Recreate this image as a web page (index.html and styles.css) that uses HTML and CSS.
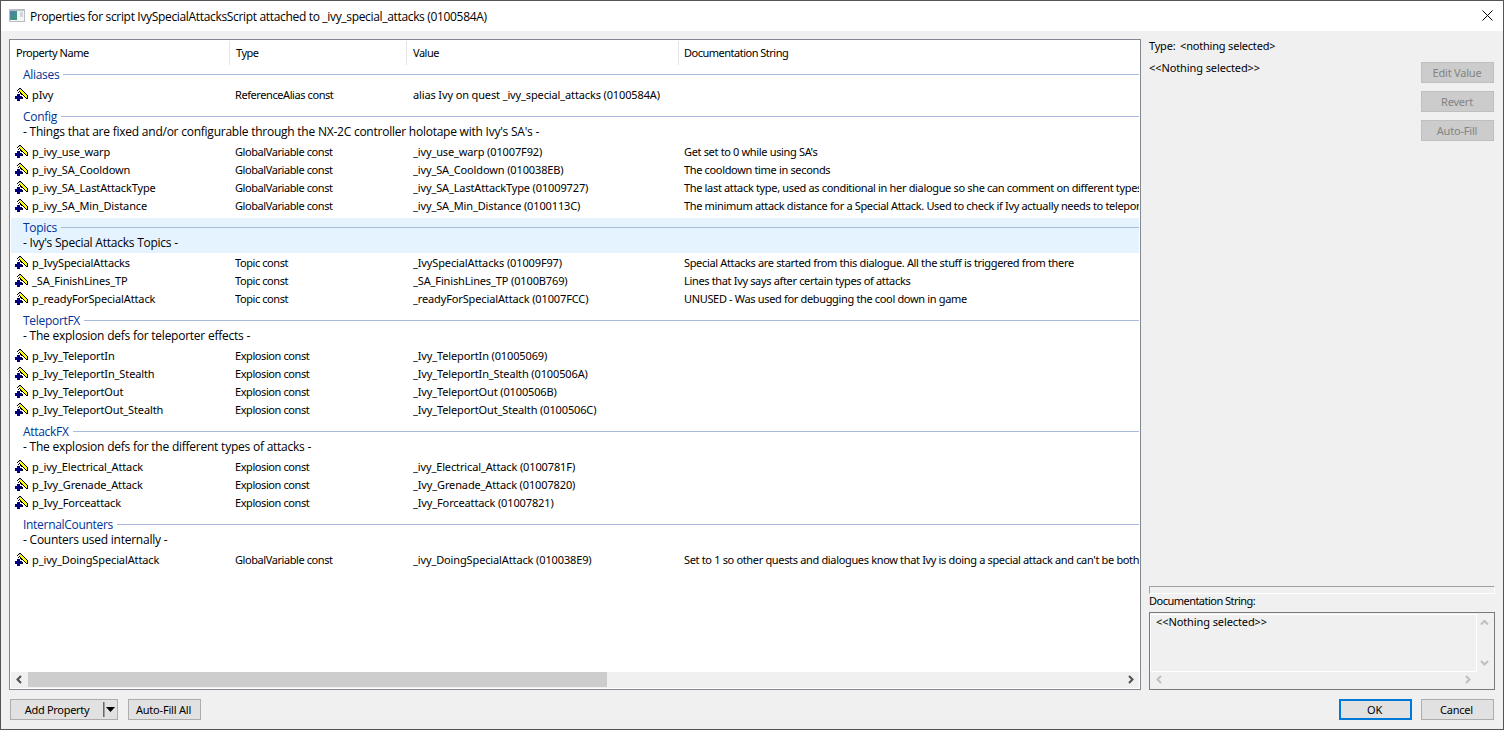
FILE: index.html
```
<!DOCTYPE html>
<html lang="en">
<head>
    <meta charset="UTF-8">
    <title>Properties for script IvySpecialAttacksScript</title>
    <link rel="stylesheet" href="styles.css">
</head>
<body>
    <svg class="defs">
        <linearGradient id="pane" x2="1" y2="1"><stop offset="0" stop-color="#4a7fb5"/><stop offset="1" stop-color="#3f9a6c"/></linearGradient>
        <symbol id="wand" viewBox="0 0 14 14" shape-rendering="crispEdges">
            <path fill="#000" d="M4 0h2v1H4zM3 1h1v1H3zM2 2h1v1H2zM6 1h1v1H6zM7 2h1v1H7zM8 3h1v1H8zM9 4h1v1H9zM10 5h1v1h-1zM11 6h1v1h-1zM12 7h1v3h-1zM4 3h1v1H4zM5 4h1v2H5zM6 5h1v2H6zM7 6h1v1H7zM8 7h1v1H8zM9 8h1v1H9zM10 9h1v1h-1zM11 10h2v1h-2zM3 4h1v1H3zM7 9h1v2H7z"/>
            <path fill="#c0c0c0" d="M4 1h2v1H4z"/>
            <path fill="#ff0" d="M4 2h3v1H4zM5 3h3v1H5zM6 4h3v1H6zM7 5h3v1H7zM8 6h3v1H8zM9 7h3v1H9zM10 8h2v1h-2zM11 9h1v1h-1z"/>
            <path fill="#000080" d="M2 6h3v2h2v3H5v2H2v-2H0V8h2z"/>
        </symbol>
    </svg>
    <div class="window">
        <div class="titlebar">
            <svg class="app-icon" width="16" height="13" viewBox="0 0 16 13"><path fill="#b9bec2" d="M0 0h16v13H0z"/><path fill="#f4f5f6" d="M1 2h14v10H1z"/><path fill="url(#pane)" d="M1 2h7v9H1z"/><path fill="#cfd6dc" d="M11 3h3v5h-3z"/></svg>
            <span class="title">Properties for script IvySpecialAttacksScript attached to _ivy_special_attacks (0100584A)</span>
            <svg class="close" width="11" height="11" viewBox="0 0 11 11"><path stroke="#000" d="M.5.5l10 10M10.5.5l-10 10"/></svg>
        </div>

        <div class="main">
            <div class="list">
                <div class="list-head">
                    <span>Property Name</span><span>Type</span><span>Value</span><span>Documentation String</span>
                </div>
                <div class="list-body" id="list-body"></div>
                <div class="hscroll">
                    <svg width="17" height="15" viewBox="0 0 17 15"><path class="arrow" d="M10 4L6.500 7.500 10 11"/></svg>
                    <div class="track"><div class="thumb"></div></div>
                    <svg width="17" height="15" viewBox="0 0 17 15"><path class="arrow" d="M7 4l3.500 3.500L7 11"/></svg>
                </div>
            </div>

            <div class="side">
                <div class="side-top">
                    <div class="side-info">
                        <div class="type-label">Type: <span>&lt;nothing selected&gt;</span></div>
                        <div class="type-value">&lt;&lt;Nothing selected&gt;&gt;</div>
                    </div>
                    <div class="side-buttons">
                        <button disabled>Edit Value</button>
                        <button disabled>Revert</button>
                        <button disabled>Auto-Fill</button>
                    </div>
                </div>
                <div class="etched"></div>
                <div class="doc-label">Documentation String:</div>
                <div class="doc-box">
                    <div class="doc-text">&lt;&lt;Nothing selected&gt;&gt;</div>
                    <div class="doc-vscroll">
                        <svg width="16" height="17" viewBox="0 0 16 17"><path class="arrow off" d="M4 10.500L7.500 7l3.500 3.500"/></svg>
                        <svg width="16" height="17" viewBox="0 0 16 17"><path class="arrow off" d="M4 6l3.500 3.500L11 6"/></svg>
                    </div>
                    <div class="doc-hscroll">
                        <svg width="17" height="17" viewBox="0 0 17 17"><path class="arrow off" d="M10 4L6.500 7.500 10 11"/></svg>
                        <svg width="17" height="17" viewBox="0 0 17 17"><path class="arrow off" d="M6 4l3.500 3.500L6 11"/></svg>
                    </div>
                </div>
            </div>
        </div>

        <div class="footer">
            <button class="split"><span>Add Property</span><i></i><svg width="9" height="5" viewBox="0 0 9 5"><path d="M0 0h9L4.500 5z"/></svg></button>
            <button>Auto-Fill All</button>
            <div class="spacer"></div>
            <button class="ok">OK</button>
            <button>Cancel</button>
        </div>
    </div>
    <script src="script.js"></script>
</body>
</html>
```
FILE: styles.css
```
* {
    box-sizing: border-box;
}
body {
    margin: 0;
    font-family: 'Noto Sans', sans-serif;
    font-size: 11px;
    letter-spacing: -0.2px;
    color: #000;
    white-space: nowrap;
    overflow: hidden;
}
svg {
    display: block;
    flex: none;
}
.defs {
    position: absolute;
    width: 0;
    height: 0;
}
.window {
    width: 1504px;
    height: 730px;
    border: 1px solid #555;
    background: #f0f0f0;
    display: flex;
    flex-direction: column;
}
.titlebar {
    height: 30px;
    background: #fff;
    display: flex;
    align-items: center;
    padding: 0 10px 0 8px;
}
.app-icon {
    margin-bottom: 2px;
}
.close {
    margin-bottom: 1px;
}
.title {
    flex: 1;
    margin-left: 5px;
    font-family: 'Open Sans', sans-serif;
    font-size: 12px;
    letter-spacing: -0.33px;
}
.main {
    height: 651px;
    margin: 8px 8px 0;
    display: flex;
    gap: 8px;
}
.list {
    width: 1132px;
    border: 1px solid #828790;
    padding: 1px;
    background: #fff;
    display: flex;
    flex-direction: column;
}
.list-head {
    height: 24px;
    display: grid;
    grid-template-columns: 219px 177px 272px 1fr;
    letter-spacing: -0.5px;
    line-height: 23px;
}
.list-head span {
    height: 24px;
    padding-left: 5px;
    border-right: 1px solid #e5e5e5;
}
.list-head span + span {
    padding-left: 6px;
}
.list-head span:last-child {
    padding-left: 5px;
    border: none;
}
.list-head span:first-child {
    letter-spacing: -0.45px;
}
.list-body {
    flex: 1;
}
.group {
    margin: 3px 0 1px;
    height: 35px;
    padding-left: 12px;
    font-family: 'Open Sans', sans-serif;
    font-size: 12px;
    letter-spacing: -0.3px;
}
.group:first-child {
    margin-top: 0;
    height: 20px;
}
.group.hover {
    background: #e5f3ff;
}
.group-title {
    height: 17px;
    line-height: 20px;
    color: #003399;
    display: flex;
}
.group-title::after {
    content: '';
    flex: 1;
    height: 1px;
    margin: 9px 0 0 4px;
    background: #a9bbdd;
}
.group-sub {
    line-height: 15px;
    letter-spacing: -0.25px;
    word-spacing: 0.1px;
}
.row {
    height: 18px;
    line-height: 18px;
    display: grid;
    grid-template-columns: 21px 203px 178px 271px 455px;
}
.row svg {
    width: 14px;
    height: 14px;
    margin: 2px 0 0 4px;
}
.row span {
    overflow: hidden;
}
.name {
    letter-spacing: -0.12px;
}
.type {
    letter-spacing: -0.42px;
}
.value {
    letter-spacing: -0.13px;
}
.doc {
    letter-spacing: -0.34px;
}
.hscroll {
    height: 16px;
    background: #f0f0f0;
    display: flex;
}
.track {
    flex: 1;
}
.thumb {
    width: 579px;
    height: 15px;
    background: #cdcdcd;
}
.arrow {
    fill: none;
    stroke: #505050;
    stroke-width: 2;
}
.arrow.off {
    stroke: #bfbfbf;
}
.side {
    width: 346px;
    display: flex;
    flex-direction: column;
}
.side-top {
    flex: 1;
    display: flex;
    justify-content: space-between;
}
.type-label {
    height: 14px;
    line-height: 14px;
}
.type-label span {
    margin-left: 2px;
}
.type-value {
    margin-top: 8px;
    line-height: 14px;
    letter-spacing: -0.1px;
}
.side-buttons {
    padding: 23px 1px 0 0;
    display: flex;
    flex-direction: column;
    gap: 8px;
}
button {
    width: 73px;
    height: 21px;
    padding: 0 2px 0 0;
    border: 1px solid #adadad;
    background: #e1e1e1;
    color: #000;
    font: inherit;
    letter-spacing: inherit;
    line-height: 19px;
}
button:disabled {
    padding-right: 1px;
    border-color: #bfbfbf;
    background: #ccc;
    color: #838383;
}
.etched {
    height: 8px;
    border: 1px solid #a0a0a0;
    border-right-color: #fff;
    border-bottom-color: #fff;
}
.doc-label {
    height: 18px;
    line-height: 14px;
    letter-spacing: -0.52px;
}
.doc-box {
    height: 78px;
    border: 1px solid #7a7a7a;
    padding: 1px;
    display: grid;
    grid-template-columns: 326px 16px;
    grid-template-rows: 58px 16px;
}
.doc-text {
    padding-left: 5px;
    line-height: 14px;
    letter-spacing: -0.1px;
    border: 1px solid #fff;
    margin-left: -1px;
}
.doc-vscroll {
    display: flex;
    flex-direction: column;
    justify-content: space-between;
}
.doc-hscroll {
    display: flex;
    justify-content: space-between;
}
.footer {
    display: flex;
    margin: 9px 9px 0;
}
.footer button + button {
    margin-left: 9px;
}
.spacer {
    flex: 1;
}
.footer .split {
    width: 108px;
    display: flex;
    align-items: center;
}
.split span {
    flex: 1;
    text-align: center;
    letter-spacing: -0.3px;
}
.split i {
    width: 2px;
    height: 15px;
    border-left: 1px solid #696969;
    border-right: 1px solid #a0a0a0;
    margin-right: 1px;
}
.footer .split + button {
    margin-left: 10px;
}
.footer .ok {
    border: 2px solid #0078d7;
    line-height: 17px;
}
```
FILE: script.js
```
const groups = [
    { title: 'Aliases', rows: [
        ['pIvy', 'ReferenceAlias const', 'alias Ivy on quest _ivy_special_attacks (0100584A)', '']
    ]},
    { title: 'Config', sub: "- Things that are fixed and/or configurable through the NX-2C controller holotape with Ivy's SA's -", rows: [
        ['p_ivy_use_warp', 'GlobalVariable const', '_ivy_use_warp (01007F92)', "Get set to 0 while using SA's"],
        ['p_ivy_SA_Cooldown', 'GlobalVariable const', '_ivy_SA_Cooldown (010038EB)', 'The cooldown time in seconds'],
        ['p_ivy_SA_LastAttackType', 'GlobalVariable const', '_ivy_SA_LastAttackType (01009727)', 'The last attack type, used as conditional in her dialogue so she can comment on different types'],
        ['p_ivy_SA_Min_Distance', 'GlobalVariable const', '_ivy_SA_Min_Distance (0100113C)', 'The minimum attack distance for a Special Attack. Used to check if Ivy actually needs to telepor']
    ]},
    { title: 'Topics', hover: true, sub: "- Ivy's Special Attacks Topics -", rows: [
        ['p_IvySpecialAttacks', 'Topic const', '_IvySpecialAttacks (01009F97)', 'Special Attacks are started from this dialogue. All the stuff is triggered from there'],
        ['_SA_FinishLines_TP', 'Topic const', '_SA_FinishLines_TP (0100B769)', 'Lines that Ivy says after certain types of attacks'],
        ['p_readyForSpecialAttack', 'Topic const', '_readyForSpecialAttack (01007FCC)', 'UNUSED - Was used for debugging the cool down in game']
    ]},
    { title: 'TeleportFX', sub: '- The explosion defs for teleporter effects -', rows: [
        ['p_Ivy_TeleportIn', 'Explosion const', '_Ivy_TeleportIn (01005069)', ''],
        ['p_Ivy_TeleportIn_Stealth', 'Explosion const', '_Ivy_TeleportIn_Stealth (0100506A)', ''],
        ['p_Ivy_TeleportOut', 'Explosion const', '_Ivy_TeleportOut (0100506B)', ''],
        ['p_Ivy_TeleportOut_Stealth', 'Explosion const', '_Ivy_TeleportOut_Stealth (0100506C)', '']
    ]},
    { title: 'AttackFX', sub: '- The explosion defs for the different types of attacks -', rows: [
        ['p_ivy_Electrical_Attack', 'Explosion const', '_ivy_Electrical_Attack (0100781F)', ''],
        ['p_Ivy_Grenade_Attack', 'Explosion const', '_Ivy_Grenade_Attack (01007820)', ''],
        ['p_Ivy_Forceattack', 'Explosion const', '_Ivy_Forceattack (01007821)', '']
    ]},
    { title: 'InternalCounters', sub: '- Counters used internally -', rows: [
        ['p_ivy_DoingSpecialAttack', 'GlobalVariable const', '_ivy_DoingSpecialAttack (010038E9)', "Set to 1 so other quests and dialogues know that Ivy is doing a special attack and can't be both"]
    ]}
];
const columns = ['name', 'type', 'value', 'doc'];

let html = '';
groups.forEach(group => {
    html += `<div class="group${group.hover ? ' hover' : ''}"><div class="group-title">${group.title}</div>`;
    if (group.sub) html += `<div class="group-sub">${group.sub}</div>`;
    html += '</div>';
    group.rows.forEach(row => {
        html += '<div class="row"><svg><use href="#wand"/></svg>' + row.map((cell, i) => `<span class="${columns[i]}">${cell}</span>`).join('') + '</div>';
    });
});
document.getElementById('list-body').innerHTML = html;
```
